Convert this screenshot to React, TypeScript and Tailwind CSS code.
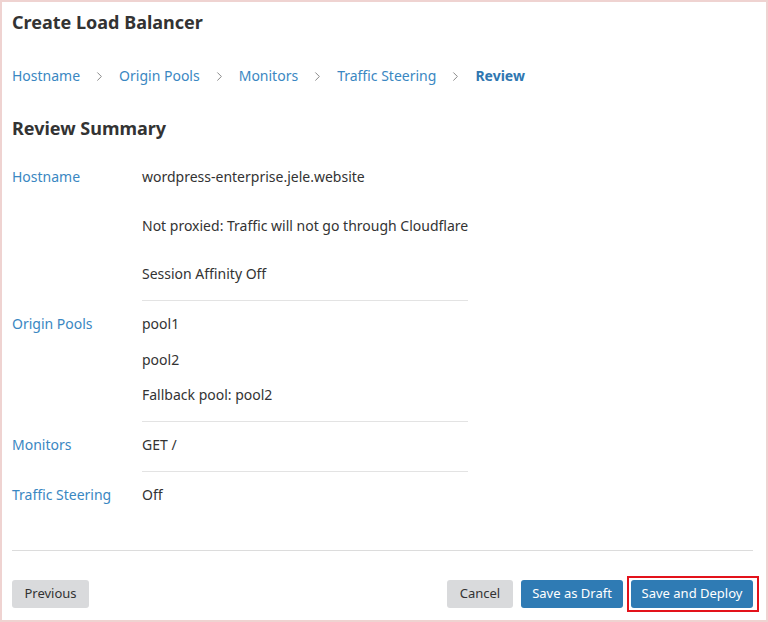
import { ChevronRight } from 'lucide-react';

const steps = ['Hostname', 'Origin Pools', 'Monitors', 'Traffic Steering'];

function Divider() {
  return <div className="h-px w-[326px] bg-[#e3e3e3]" />;
}

export default function App() {
  return (
    <div
      className="w-[768px] h-[622px] bg-white border-2 border-[#efd3d1] pl-[10px] pr-[13px] text-[#333333] text-[14px]"
      style={{ fontFamily: '"Noto Sans", "Open Sans", sans-serif' }}
    >
      <h1 className="mt-[8px] h-[24px] leading-[24px] text-[18px] font-bold text-[#333333]">Create Load Balancer</h1>

      <nav className="mt-[30px] h-[24px] flex items-center text-[14px] leading-[24px]">
        {steps.map((s) => (
          <div key={s} className="flex items-center">
            <span className="text-[#3a87c2]">{s}</span>
            <ChevronRight className="w-[15px] h-[15px] mx-[12px] text-[#8a8a8a]" strokeWidth={1.6} />
          </div>
        ))}
        <span className="font-bold text-[#2f77b1]">Review</span>
      </nav>

      <h2 className="mt-[28px] h-[24px] leading-[24px] text-[18px] font-bold">Review Summary</h2>

      <div className="mt-[27px] grid grid-cols-[130px_1fr]">
        <div className="text-[#3a87c2] leading-[20px]">Hostname</div>
        <div className="flex flex-col">
          <div className="leading-[20px]">wordpress-enterprise.jele.website</div>
          <div className="mt-[29px] leading-[20px]">Not proxied: Traffic will not go through Cloudflare</div>
          <div className="mt-[28px] leading-[20px]">Session Affinity Off</div>
          <div className="mt-[16px]"><Divider /></div>
        </div>

        <div className="pt-[13px] text-[#3a87c2] leading-[20px]">Origin Pools</div>
        <div className="pt-[13px] flex flex-col">
          <div className="leading-[20px]">pool1</div>
          <div className="mt-[16px] leading-[20px]">pool2</div>
          <div className="mt-[15px] leading-[20px]">Fallback pool: pool2</div>
          <div className="mt-[16px]"><Divider /></div>
        </div>

        <div className="pt-[13px] text-[#3a87c2] leading-[20px]">Monitors</div>
        <div className="pt-[13px] flex flex-col">
          <div className="leading-[20px]">GET /</div>
          <div className="mt-[16px]"><Divider /></div>
        </div>

        <div className="pt-[13px] text-[#3a87c2] leading-[20px]">Traffic Steering</div>
        <div className="pt-[13px] flex flex-col">
          <div className="leading-[20px]">Off</div>
        </div>
      </div>

      <div className="mt-[45px] h-px bg-[#dcdcdc]" />

      <div className="mt-[29px] flex items-center">
        <button className="h-[28px] w-[77px] rounded-[3px] bg-[#d9dadc] text-[13px] text-[#333333]">Previous</button>
        <div className="ml-auto flex items-center gap-[8px]">
          <button className="h-[28px] w-[66px] rounded-[3px] bg-[#d9dadc] text-[13px] text-[#333333]">Cancel</button>
          <button className="h-[28px] w-[102px] rounded-[3px] bg-[#2f7bb4] text-[13px] text-white">Save as Draft</button>
          <div className="relative">
            <button className="h-[28px] w-[122px] rounded-[3px] bg-[#2f7bb4] text-[13px] text-white">Save and Deploy</button>
            <div className="absolute -top-[4px] -bottom-[4px] -left-[4px] -right-[6px] border-2 border-[#e3121b] pointer-events-none" />
          </div>
        </div>
      </div>
    </div>
  );
}
